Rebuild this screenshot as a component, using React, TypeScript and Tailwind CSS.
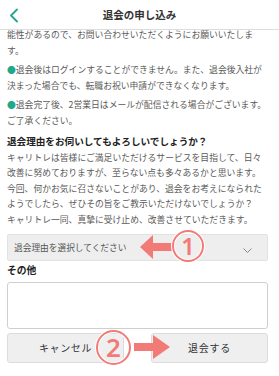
import React from 'react';

const SALMON = '#f27b78';

function CircleNum({ n, size }: { n: string; size: number }) {
  const r = size / 2 - 2;
  return (
    <svg width={size} height={size} viewBox={`0 0 ${size} ${size}`} overflow="visible">
      <circle cx={size / 2} cy={size / 2} r={r} fill="none" stroke="#ffffff" strokeWidth="4" />
      <circle cx={size / 2} cy={size / 2} r={r} fill="none" stroke={SALMON} strokeWidth="2" />
      <text
        x={size / 2}
        y={size / 2 + size * 0.25}
        textAnchor="middle"
        fontSize={size * 0.7}
        fontFamily="'Noto Sans', 'Noto Sans CJK JP', sans-serif"
        fontWeight="600"
        fill={SALMON}
      >
        {n}
      </text>
    </svg>
  );
}

export default function App() {
  return (
    <div
      className="relative w-[279px] h-[376px] overflow-hidden bg-white"
      style={{ fontFamily: "'Noto Sans CJK JP', 'Noto Sans', sans-serif" }}
    >
      {/* Header */}
      <div className="relative h-[30px] flex items-center justify-center border-b border-[#dddddd]">
        <svg className="absolute left-[9px] top-[8px]" width="10" height="15" viewBox="0 0 10 15">
          <path d="M8 1.5 L2 7.5 L8 13.5" fill="none" stroke="#22a48a" strokeWidth="1.8" strokeLinecap="round" strokeLinejoin="round" />
        </svg>
        <h1 className="text-[10.5px] font-bold text-[#333333]">退会の申し込み</h1>
      </div>

      <div className="pl-[7px] pr-[11px] text-[8.8px] leading-[15.5px] text-[#5a5a5a] whitespace-nowrap">
        <p className="mt-[-3px]">
          能性があるので、お問い合わせいただくようにお願いいたしま
          <br />
          す。
        </p>
        <p className="mt-[4px]">
          <span className="text-[#1fa889]">●</span>退会後はログインすることができません。また、退会後入社が
          <br />
          決まった場合でも、転職お祝い申請ができなくなります。
        </p>
        <p className="mt-[4px]">
          <span className="text-[#1fa889]">●</span>退会完了後、2営業日はメールが配信される場合がございます。
          <br />
          ご了承ください。
        </p>

        <h2 className="mt-[6px] text-[9.6px] font-bold text-[#222222]">退会理由をお伺いしてもよろしいでしょうか？</h2>
        <p>
          キャリトレは皆様にご満足いただけるサービスを目指して、日々
          <br />
          改善に努めておりますが、至らない点も多々あるかと思います。
          <br />
          今回、何かお気に召さないことがあり、退会をお考えになられた
          <br />
          ようでしたら、ぜひその旨をご教示いただけないでしょうか？
          <br />
          キャリトレ一同、真摯に受け止め、改善させていただきます。
        </p>

        {/* Select */}
        <div className="mt-[7px] h-[27px] flex items-center justify-between pl-[6px] pr-[15px] bg-[#eeeeee] border border-[#e2e2e2] rounded-[2px]">
          <span className="text-[8.7px] text-[#555555]">退会理由を選択してください</span>
          <svg className="mt-[6px]" width="9" height="5" viewBox="0 0 9 5">
            <path d="M0.5 0.5 L4.5 4.5 L8.5 0.5" fill="none" stroke="#888888" strokeWidth="1" />
          </svg>
        </div>

        <div className="mt-[2px] text-[9.8px] font-bold text-[#222222]">その他</div>
        <div className="mt-[3px] h-[47px] bg-white border border-[#cfcfcf] rounded-[3px]" />

        {/* Buttons */}
        <div className="mt-[4px] flex justify-between">
          <button className="w-[117px] h-[30px] bg-[#efefef] border border-[#dcdcdc] rounded-[3px] text-[10px] tracking-[0.6px] text-[#333333]">
            キャンセル
          </button>
          <button className="w-[117px] h-[30px] bg-[#efefef] border border-[#dcdcdc] rounded-[3px] text-[10px] tracking-[0.8px] text-[#333333]">
            退会する
          </button>
        </div>
      </div>

      {/* Annotation 1 */}
      <svg className="absolute left-[139px] top-[234px]" width="36" height="26" viewBox="0 0 36 26">
        <polygon points="1,13 14,1 14,9 35,9 35,17 14,17 14,25" fill={SALMON} />
      </svg>
      <div className="absolute left-[171px] top-[229px]">
        <CircleNum n="1" size={34} />
      </div>

      {/* Annotation 2 */}
      <div className="absolute left-[95px] top-[329px]">
        <CircleNum n="2" size={37} />
      </div>
      <svg className="absolute left-[133px] top-[334px]" width="38" height="26" viewBox="0 0 38 26">
        <polygon points="1,9 20,9 20,1 37,13 20,25 20,17 1,17" fill={SALMON} />
      </svg>
    </div>
  );
}
